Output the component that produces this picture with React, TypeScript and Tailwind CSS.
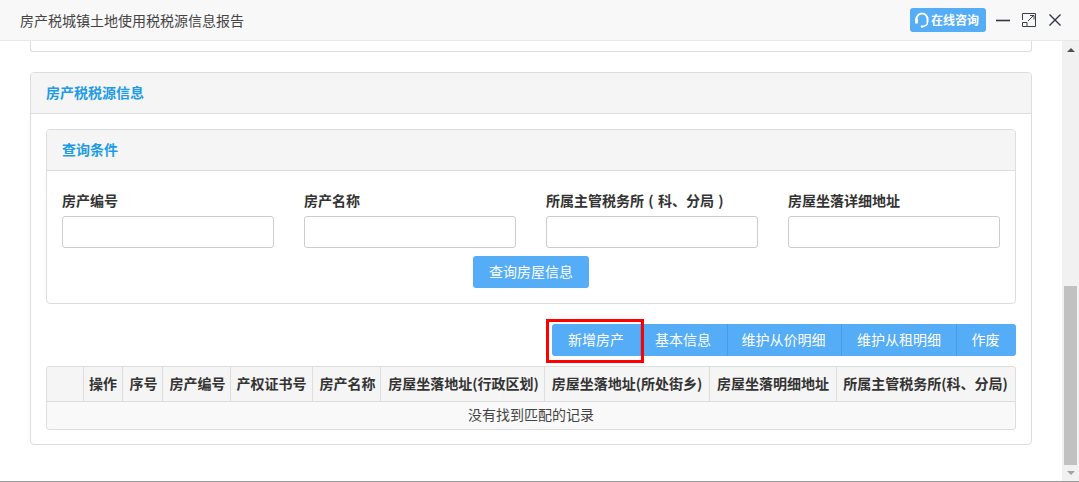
import React from "react";

const font = { fontFamily: '"Noto Sans CJK SC", "Liberation Sans", sans-serif' };

function Field({ label }: { label: React.ReactNode }) {
  return (
    <div className="w-[212px]">
      <div className="h-[20px] whitespace-nowrap text-[14px] font-bold leading-[18px] text-[#333]">{label}</div>
      <div className="mt-[5px] h-[32px] rounded-[3px] border border-[#ccc] bg-white" />
    </div>
  );
}

const cols = [
  ["", 37, ""],
  ["操作", 39, ""],
  ["序号", 40, "pl-[2px]"],
  ["房产编号", 68, "pl-[2px]"],
  ["产权证书号", 82, ""],
  ["房产名称", 68, "pl-[2px]"],
  ["房屋坐落地址(行政区划)", 164, "pl-[2px]"],
  ["房屋坐落地址(所处街乡)", 165, ""],
  ["房屋坐落明细地址", 127, ""],
  ["所属主管税务所(科、分局)", 178, "pr-[1px]"],
] as const;

export default function App() {
  return (
    <div className="flex h-[482px] w-[1079px] flex-col overflow-hidden bg-white text-[14px] text-[#333]" style={font}>
      <header className="flex h-[41px] shrink-0 items-center border-b border-[#e9e9e9] bg-[#f8f8f8] pl-[20px] pr-[18px]">
        <div className="flex-1 text-[#444]">房产税城镇土地使用税税源信息报告</div>
        <div className="flex h-[24px] w-[76px] items-center gap-[1px] rounded-[3px] bg-[#54adf6] pl-[4px] text-[12px] font-bold text-white">
          <svg width="16" height="18" viewBox="0 0 16 18" fill="none" stroke="white" strokeWidth="2">
            <path d="M2.500 11V8a5.500 5.500 0 0 1 11 0v3" />
            <path d="M13.500 11c0 2.500-1.500 4-4.500 4.500" strokeWidth="1.500" />
            <circle cx="8" cy="15.500" r="1.300" fill="white" stroke="none" />
            <rect x="1.500" y="8" width="1.800" height="4" fill="white" strokeWidth="1" />
          </svg>
          <span>在线咨询</span>
        </div>
        <svg className="ml-[10px]" width="14" height="14" viewBox="0 0 14 14" fill="none" stroke="#2f3640" strokeWidth="1.600">
          <path d="M0 7.500h14" />
        </svg>
        <svg className="ml-[12px]" width="14" height="14" viewBox="0 0 14 14" fill="none" stroke="#3a404a" strokeWidth="1">
          <path d="M.5 7V.5h13v13H5" />
          <path d="M.5 9.500h4.500v4H.5z" />
          <path d="M6 8l6-6M8 2.500h4V6.500" />
        </svg>
        <svg className="ml-[13px]" width="12" height="12" viewBox="0 0 12 12" fill="none" stroke="#2f3640" strokeWidth="1.400">
          <path d="M.5.5l11 11M11.500.5l-11 11" />
        </svg>
      </header>

      <div className="flex min-h-0 flex-1 border-b border-[#999]">
        <main className="min-w-0 flex-1 overflow-hidden pl-[30px]">
          <div className="h-[11px] w-[1002px] rounded-b-[3px] border-x border-b border-[#ddd]" />
          <section className="mt-[20px] h-[373px] w-[1002px] rounded-[4px] border border-[#ddd]">
            <div className="flex h-[41px] items-center rounded-t-[3px] border-b border-[#ddd] bg-[#f5f5f5] pb-[2px] pl-[15px] font-bold text-[#1d9ce5]">
              房产税税源信息
            </div>
            <div className="px-[15px] pt-[15px]">
              <div className="h-[175px] rounded-[4px] border border-[#ddd]">
                <div className="flex h-[41px] items-center rounded-t-[3px] border-b border-[#ddd] bg-[#f5f5f5] pb-[2px] pl-[15px] font-bold text-[#1d9ce5]">
                  查询条件
                </div>
                <div className="flex gap-[30px] pl-[15px] pt-[20px]">
                  <Field label="房产编号" />
                  <Field label="房产名称" />
                  <Field
                    label={
                      <>
                        所属主管税务所
                        <span className="inline-block w-[14px] text-center">(</span>
                        科、分局
                        <span className="inline-block w-[14px] text-center">)</span>
                      </>
                    }
                  />
                  <Field label="房屋坐落详细地址" />
                </div>
                <div className="mt-[8px] flex justify-center">
                  <button className="h-[32px] w-[116px] rounded-[3px] bg-[#54adf6] pb-[2px] text-white">查询房屋信息</button>
                </div>
              </div>

              <div className="mt-[20px] flex justify-end">
                <div className="relative flex h-[32px] items-center rounded-[3px] bg-[#54adf6] text-white">
                  <div className="absolute left-[-6px] top-[-5px] h-[44px] w-[98px] border-[3px] border-[#f00]" />
                  <span className="flex h-full w-[88px] items-center justify-center pb-[2px]">新增房产</span>
                  <span className="flex h-full w-[87px] items-center justify-center border-l border-[#3f9fec] pb-[2px] pr-[2px]">基本信息</span>
                  <span className="flex h-full w-[114px] items-center justify-center border-l border-[#3f9fec] pb-[2px] pr-[2px]">维护从价明细</span>
                  <span className="flex h-full w-[115px] items-center justify-center border-l border-[#3f9fec] pb-[2px]">维护从租明细</span>
                  <span className="flex h-full w-[60px] items-center justify-center border-l border-[#3f9fec] pb-[2px] pr-[2px]">作废</span>
                </div>
              </div>

              <div className="mt-[10px] h-[64px] w-[970px] overflow-hidden rounded-[3px] border border-[#ddd] bg-[#f9f9f9]">
                <div className="flex h-[35px] border-b border-[#ddd] bg-[#f5f5f5] font-bold">
                  {cols.map(([t, w, c], i) => (
                    <div
                      key={i}
                      className={`flex shrink-0 items-center justify-center whitespace-nowrap border-r border-[#ddd] pb-[2px] last:border-r-0 ${c}`}
                      style={{ width: w }}
                    >
                      {t}
                    </div>
                  ))}
                </div>
                <div className="flex h-[27px] items-center justify-center pb-[2px] text-[#444]">没有找到匹配的记录</div>
              </div>
            </div>
          </section>
        </main>

        <aside className="flex w-[17px] shrink-0 flex-col bg-[#f1f1f1]">
          <div className="flex h-[17px] items-center justify-center">
            <div className="h-0 w-0 border-x-[4px] border-b-[4px] border-x-transparent border-b-[#505050]" />
          </div>
          <div className="flex-1" />
          <div className="mx-[2px] h-[179px] bg-[#c1c1c1]" />
          <div className="flex h-[16px] items-center justify-center">
            <div className="h-0 w-0 border-x-[4px] border-t-[4px] border-x-transparent border-t-[#a3a3a3]" />
          </div>
        </aside>
      </div>
    </div>
  );
}
